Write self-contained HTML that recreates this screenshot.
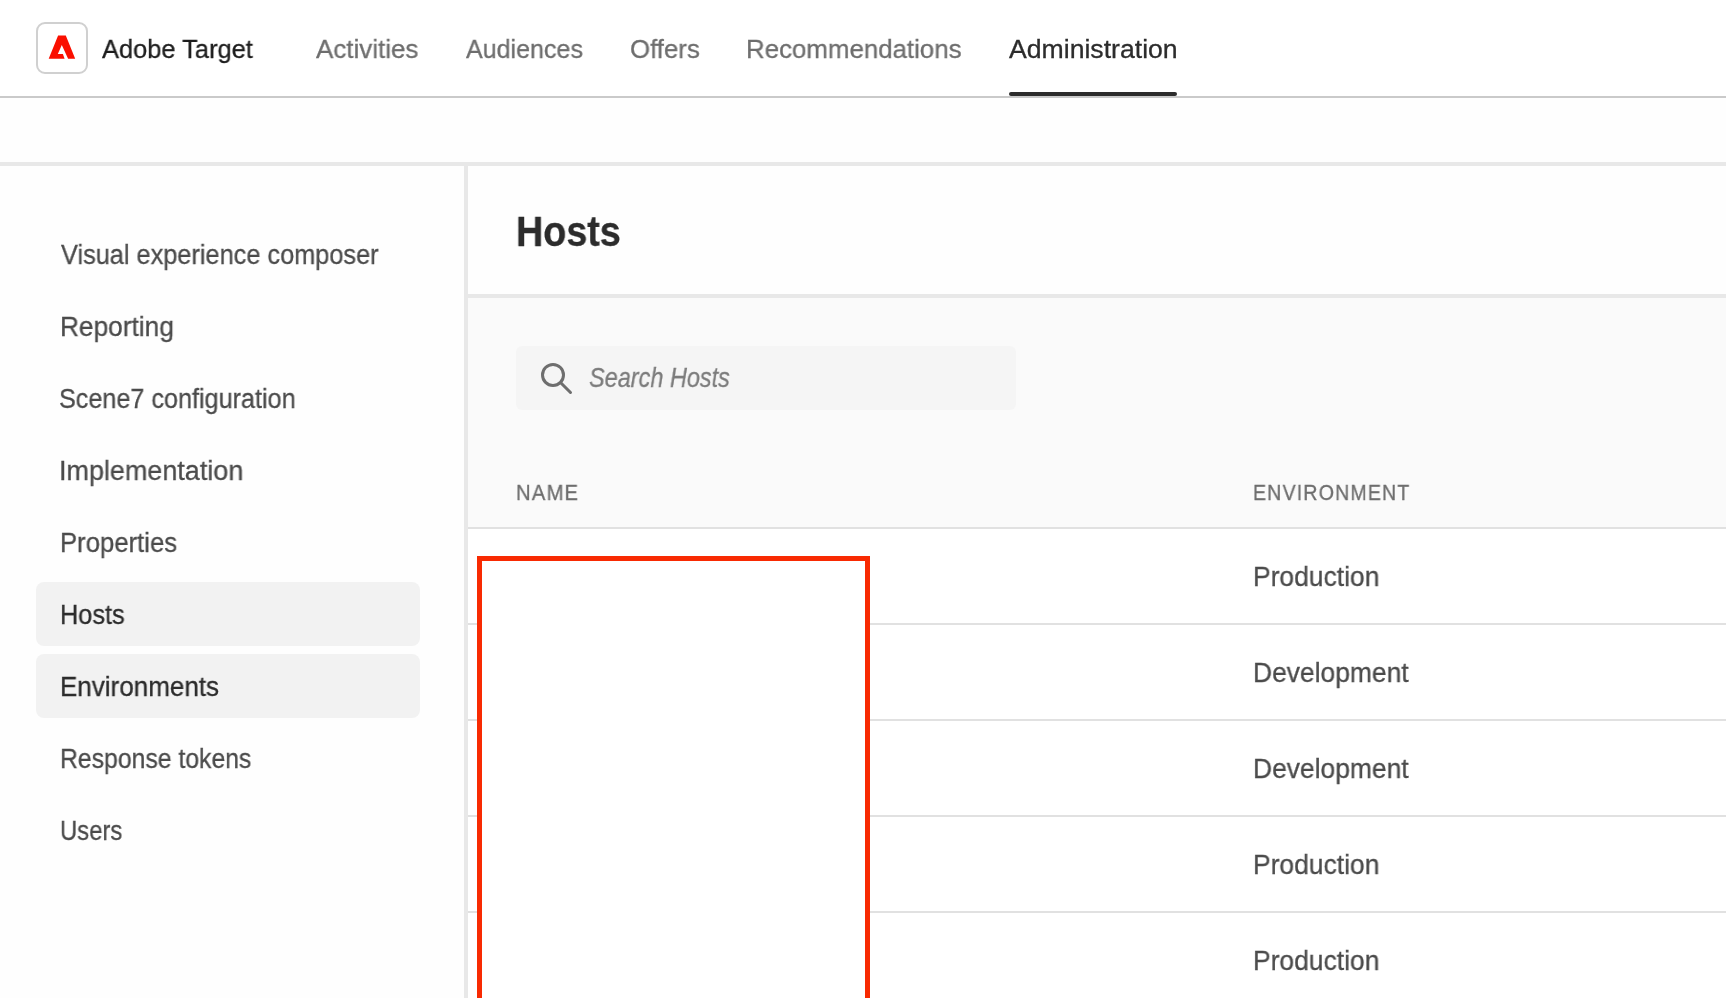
<!DOCTYPE html>
<html><head><meta charset="utf-8"><title>Adobe Target - Hosts</title>
<style>
html,body{margin:0;padding:0;}
body{width:1726px;height:998px;overflow:hidden;position:relative;background:#fefefe;font-family:"Liberation Sans",sans-serif;}
.a{position:absolute;}
.t{position:absolute;white-space:nowrap;transform-origin:0 0;will-change:transform;-webkit-text-stroke:0.3px currentColor;}
</style></head><body>
<!-- header -->
<div class="a" style="left:0;top:0;width:1726px;height:96px;background:#fff"></div>
<div class="a" style="left:0;top:96px;width:1726px;height:2px;background:#cacaca"></div>
<div class="a" style="left:1009px;top:92px;width:168px;height:4px;border-radius:2px;background:#2c2c2c"></div>
<div class="a" style="left:36px;top:22px;width:52px;height:52px;box-sizing:border-box;border:2px solid #d0d0d0;border-radius:9px;background:#fff"></div>
<svg class="a" style="left:0;top:0" width="100" height="100" viewBox="0 0 100 100">
<path fill="#fa0f00" d="M58.1 35.4 L65.8 35.4 L75.2 58.8 L68.1 58.8 L61.8 45.0 L57.8 54.0 L62.9 54.0 L64.6 58.8 L48.7 58.8 Z"/>
</svg>
<!-- band -->
<div class="a" style="left:0;top:162px;width:1726px;height:4px;background:#e8e8e8"></div>
<div class="a" style="left:464px;top:166px;width:4px;height:832px;background:#e8e8e8"></div>
<div class="a" style="left:468px;top:294px;width:1258px;height:4px;background:#e8e8e8"></div>
<div class="a" style="left:468px;top:298px;width:1258px;height:229px;background:#fafafa"></div>
<div class="a" style="left:468px;top:529px;width:1258px;height:469px;background:#fff"></div>
<div class="a" style="left:468px;top:527px;width:1258px;height:2px;background:#e1e1e1"></div>
<div class="a" style="left:468px;top:623px;width:1258px;height:2px;background:#e1e1e1"></div>
<div class="a" style="left:468px;top:719px;width:1258px;height:2px;background:#e1e1e1"></div>
<div class="a" style="left:468px;top:815px;width:1258px;height:2px;background:#e1e1e1"></div>
<div class="a" style="left:468px;top:911px;width:1258px;height:2px;background:#e1e1e1"></div>
<!-- search -->
<div class="a" style="left:516px;top:346px;width:500px;height:64px;border-radius:6px;background:#f5f5f5"></div>
<svg class="a" style="left:530px;top:352px" width="50" height="50" viewBox="0 0 50 50">
<circle cx="23" cy="22.9" r="10.5" fill="none" stroke="#6e6e6e" stroke-width="3"/>
<path d="M31 31 L40.5 40.5" stroke="#6e6e6e" stroke-width="3" stroke-linecap="round"/>
</svg>
<!-- sidebar selected -->
<div class="a" style="left:36px;top:582px;width:384px;height:64px;border-radius:8px;background:#f2f2f2"></div>
<div class="a" style="left:36px;top:654px;width:384px;height:64px;border-radius:8px;background:#f2f2f2"></div>
<!-- red box -->
<div class="a" style="left:477px;top:556px;width:393px;height:460px;box-sizing:border-box;border:5px solid #f82a02;background:#fff"></div>
<div class="t" style="left:102.45px;top:35.58px;font-size:26.60px;line-height:26.60px;color:#1d1d1d;transform:scaleX(0.9567);">Adobe Target</div>
<div class="t" style="left:315.55px;top:35.58px;font-size:26.60px;line-height:26.60px;color:#6e6e6e;transform:scaleX(0.9767);">Activities</div>
<div class="t" style="left:465.95px;top:35.58px;font-size:26.60px;line-height:26.60px;color:#6e6e6e;transform:scaleX(0.9415);">Audiences</div>
<div class="t" style="left:630.09px;top:35.58px;font-size:26.60px;line-height:26.60px;color:#6e6e6e;transform:scaleX(0.9693);">Offers</div>
<div class="t" style="left:745.68px;top:35.58px;font-size:26.60px;line-height:26.60px;color:#6e6e6e;transform:scaleX(0.9720);">Recommendations</div>
<div class="t" style="left:1008.95px;top:35.58px;font-size:26.60px;line-height:26.60px;color:#2c2c2c;transform:scaleX(1.0009);">Administration</div>
<div class="t" style="left:60.70px;top:240.99px;font-size:27.18px;line-height:27.18px;color:#4b4b4b;transform:scaleX(0.9318);">Visual experience composer</div>
<div class="t" style="left:59.75px;top:312.99px;font-size:27.18px;line-height:27.18px;color:#4b4b4b;transform:scaleX(0.9668);">Reporting</div>
<div class="t" style="left:59.37px;top:384.99px;font-size:27.18px;line-height:27.18px;color:#4b4b4b;transform:scaleX(0.9268);">Scene7 configuration</div>
<div class="t" style="left:59.42px;top:456.99px;font-size:27.18px;line-height:27.18px;color:#4b4b4b;transform:scaleX(0.9919);">Implementation</div>
<div class="t" style="left:59.79px;top:528.99px;font-size:27.18px;line-height:27.18px;color:#4b4b4b;transform:scaleX(0.9455);">Properties</div>
<div class="t" style="left:59.82px;top:600.99px;font-size:27.18px;line-height:27.18px;color:#2c2c2c;transform:scaleX(0.9326);">Hosts</div>
<div class="t" style="left:59.77px;top:672.99px;font-size:27.18px;line-height:27.18px;color:#2c2c2c;transform:scaleX(0.9572);">Environments</div>
<div class="t" style="left:59.87px;top:744.99px;font-size:27.18px;line-height:27.18px;color:#4b4b4b;transform:scaleX(0.9114);">Response tokens</div>
<div class="t" style="left:60.06px;top:816.99px;font-size:27.18px;line-height:27.18px;color:#4b4b4b;transform:scaleX(0.8793);">Users</div>
<div class="t" style="left:516.27px;top:209.80px;font-size:42.88px;line-height:42.88px;color:#2c2c2c;transform:scaleX(0.8796);font-weight:bold;">Hosts</div>
<div class="t" style="left:589.04px;top:363.67px;font-size:27.33px;line-height:27.33px;color:#7c7c7c;transform:scaleX(0.8588);font-style:italic;">Search Hosts</div>
<div class="t" style="left:515.54px;top:481.54px;font-size:21.80px;line-height:21.80px;color:#6e6e6e;transform:scaleX(0.9286);letter-spacing:0.06em;">NAME</div>
<div class="t" style="left:1252.80px;top:481.74px;font-size:21.80px;line-height:21.80px;color:#6e6e6e;transform:scaleX(0.8977);letter-spacing:0.06em;">ENVIRONMENT</div>
<div class="t" style="left:1252.73px;top:562.62px;font-size:27.62px;line-height:27.62px;color:#4b4b4b;transform:scaleX(0.9572);">Production</div>
<div class="t" style="left:1252.73px;top:658.62px;font-size:27.62px;line-height:27.62px;color:#4b4b4b;transform:scaleX(0.9566);">Development</div>
<div class="t" style="left:1252.73px;top:754.62px;font-size:27.62px;line-height:27.62px;color:#4b4b4b;transform:scaleX(0.9566);">Development</div>
<div class="t" style="left:1252.73px;top:850.62px;font-size:27.62px;line-height:27.62px;color:#4b4b4b;transform:scaleX(0.9572);">Production</div>
<div class="t" style="left:1252.73px;top:946.62px;font-size:27.62px;line-height:27.62px;color:#4b4b4b;transform:scaleX(0.9572);">Production</div>
</body></html>
